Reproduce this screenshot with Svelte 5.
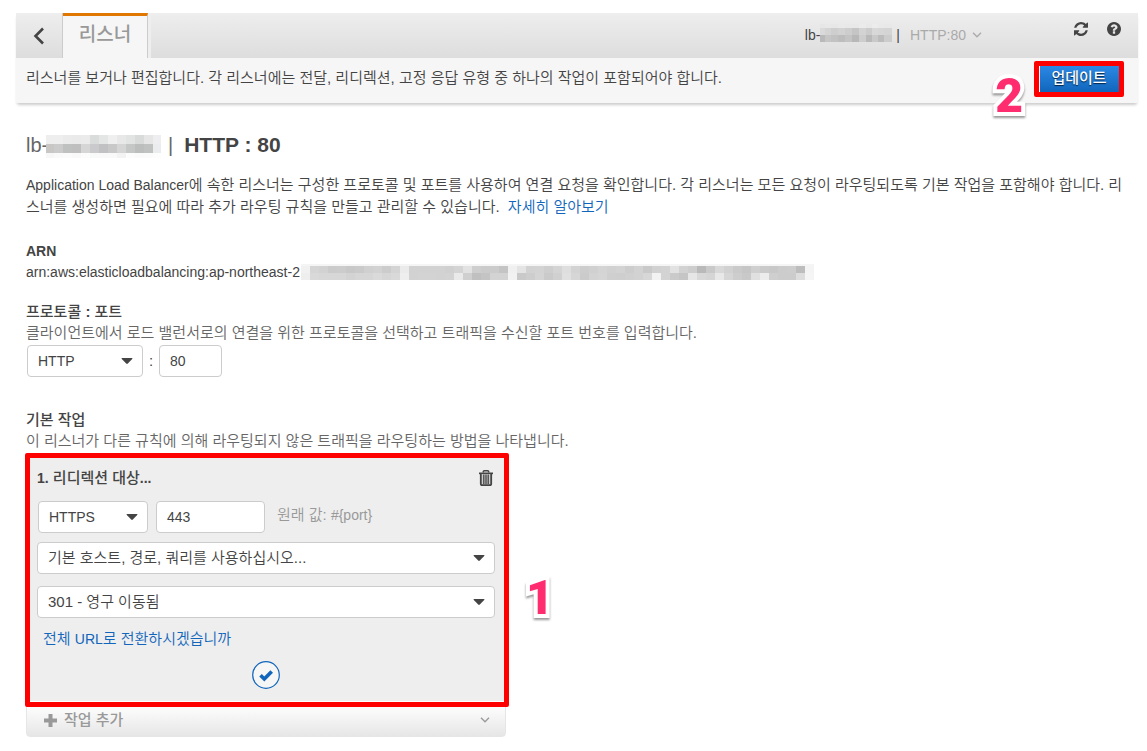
<script>
  let protocol = $state('HTTP');
  let port = $state('80');
  let redirectProtocol = $state('HTTPS');
  let redirectPort = $state('443');
  let target = $state('default');
  let status = $state('301');

  // Grey levels of the masked name cells, one string per row.
  const titleMask = {
    cols: [8, 9, 9, 9, 9, 9, 9, 9, 9, 9, 9, 9, 8],
    rows: [
      { h: 9, v: ['eee', 'eee', 'ebebeb', 'eaeaea', 'ebebeb', 'dadcdb', 'e4e5e5', 'efefef', 'e8e8e8', 'e2e3e3', 'd8dbda', 'e6e6e6', 'eeeef0'] },
      { h: 9, v: ['c9c6c6', 'cbcbcb', 'bfc0c0', 'c0bfbf', 'd6d6d6', 'cac9cc', 'c1c1c3', 'c8c8c8', 'd5d5d5', 'c5c6c6', 'bcbebe', 'c0c2c1', 'ebecee'] },
      { h: 5, v: ['f7f7f7', 'fafafa', 'fbfbfb', 'f9f9f9', 'fcfcfc', 'f8faf9', 'f9f9f9', 'f9f9f9', 'f3f3f3', 'fcfcfc', 'fafafa', 'fbfbfb', 'fdfdfd'] }
    ]
  };
  const crumbMask = {
    cols: [5, 6, 7, 7, 7, 7, 7, 6, 6, 6, 8],
    rows: [
      { h: 4, v: ['e6e6e6', 'e8e8e8', 'e7e7e7', 'e9e9e9', 'e8e8e8', 'e8e8e8', 'ebebeb', 'e8e8e8', 'ececec', 'e9e9e9', 'e8e8e8'] },
      { h: 7, v: ['dadada', 'd4d4d4', 'cecece', 'd2d2d2', 'cdcdcd', 'c5c5c5', 'd3d3d3', 'cbcbcb', 'd8d8d8', 'd6d6d6', 'd4d4d4'] },
      { h: 7, v: ['b9b9b9', 'c6c6c6', 'c2c2c2', 'bdbdbd', 'c4c4c4', 'b8b8b8', 'cdcdcd', 'b9b9b9', 'c9c9c9', 'bcbcbc', 'cccccc'] }
    ]
  };
  const arnTop = 'f1 d5 d2 cb cc c8 ca d0 d2 cc d4 eb d2 d2 d2 d2 d0 d4 e2 ce cb cb c4 f0 e4 d2 d3 ce d4 de d3 cd d0 d4 d1 d3 cd d2 c9 d1 d3 e2 d2 cd b9 c9 d8 d1 ca c6 cf ca c8 cc cd bd f4'.split(' ');
  const arnLow = 'ee d9 d7 d7 d7 d3 d6 d6 da d6 d9 ee d2 d3 d3 d2 d3 ea cf c0 c4 d3 d3 f2 c9 cd d4 ca d0 e0 d6 cb d3 d5 cf ce d0 d2 d7 f2 d3 ca c5 e6 d8 d5 e8 d6 cd c9 e0 ec cf cc cc dd f5'.split(' ');
  const grey = (a) => a.map((v) => v + v + v);
  const arnMask = {
    cols: arnTop.map(() => 9),
    rows: [
      { h: 2, v: arnTop.map(() => 'f5f5f5') },
      { h: 7, v: grey(arnTop) },
      { h: 7, v: grey(arnLow) }
    ]
  };
</script>

{#snippet mask(m)}
  {@const w = m.cols.reduce((a, b) => a + b, 0)}
  {@const h = m.rows.reduce((a, r) => a + r.h, 0)}
  <svg class="mask" width={w} height={h} viewBox="0 0 {w} {h}" shape-rendering="crispEdges" aria-hidden="true">
    {#each m.rows as row, r}
      {#each row.v as c, i}
        <rect
          x={m.cols.slice(0, i).reduce((a, b) => a + b, 0)}
          y={m.rows.slice(0, r).reduce((a, b) => a + b.h, 0)}
          width={m.cols[i]}
          height={row.h}
          fill="#{c}"
        />
      {/each}
    {/each}
  </svg>
{/snippet}

{#snippet caret()}
  <svg class="caret" width="12" height="6" viewBox="0 0 12 6" aria-hidden="true"><path d="M1.2 0h9.6q1.2 0 .4.9L6.8 5.6q-.8.7-1.6 0L.8.9Q0 0 1.2 0z" fill="#444" /></svg>
{/snippet}

{#snippet chevron()}
  <svg width="10" height="6" viewBox="0 0 10 6" aria-hidden="true"><path d="M1 .8l4 4 4-4" fill="none" stroke="currentColor" stroke-width="1.3" /></svg>
{/snippet}

<div class="page">
  <header>
    <div class="tabs">
      <button class="back" aria-label="Back">
        <svg width="12" height="18" viewBox="0 0 12 18"><path d="M10 1.5L2.5 9l7.500 7.500" fill="none" stroke="#444" stroke-width="2.600" /></svg>
      </button>
      <h1 class="tab">리스너</h1>
      <div class="crumbs">
        <span class="lb">lb-</span>{@render mask(crumbMask)}<span class="bar">|</span>
        <button class="crumb">HTTP:80 {@render chevron()}</button>
      </div>
      <div class="tools">
        <button aria-label="Refresh">
          <svg width="14" height="14" viewBox="0 0 1536 1536"><path fill="#444" d="M1511 928q0 5-1 7-64 268-268 434.500T764 1536q-146 0-282.500-55T238 1324l-129 129q-19 19-45 19t-45-19-19-45V960q0-26 19-45t45-19h448q26 0 45 19t19 45-19 45l-137 137q71 66 161 102t187 36q134 0 250-65t186-179q11-17 53-117 8-23 30-23h192q13 0 22.500 9.500t9.500 22.500zm25-800v448q0 26-19 45t-45 19h-448q-26 0-45-19t-19-45 19-45l138-138Q969 256 768 256q-134 0-250 65T332 500q-11 17-53 117-8 23-30 23H50q-13 0-22.500-9.500T18 608v-7q65-268 270-434.500T768 0q146 0 284 55.500T1297 212l130-129q19-19 45-19t45 19 19 45z" /></svg>
        </button>
        <button aria-label="Help">
          <svg width="14" height="14" viewBox="0 0 1536 1536"><path fill="#444" d="M896 1248v-192q0-14-9-23t-23-9H672q-14 0-23 9t-9 23v192q0 14 9 23t23 9h192q14 0 23-9t9-23zm256-672q0-88-55.500-163T958 297t-170-41q-243 0-371 213-15 24 8 42l132 100q7 6 19 6 16 0 25-12 53-68 86-92 34-24 86-24 48 0 85.500 26t37.500 59q0 38-20 61t-68 45q-63 28-115.500 86.500T640 892v36q0 14 9 23t23 9h192q14 0 23-9t9-23q0-19 21.500-49.500T972 829q32-18 49-28.500t46-35 44.500-48 28-60.500 12.500-81zm384 192q0 209-103 385.500T1153.500 1433 768 1536t-385.500-103T103 1153.500 0 768t103-385.500T382.500 103 768 0t385.500 103T1433 382.500 1536 768z" /></svg>
        </button>
      </div>
    </div>
    <div class="sub">
      <p>리스너를 보거나 편집합니다. 각 리스너에는 전달, 리디렉션, 고정 응답 유형 중 하나의 작업이 포함되어야 합니다.</p>
      <div class="action">
        <button class="update">업데이트</button>
        <div class="frame" aria-hidden="true"></div>
        <span class="mark two">2</span>
      </div>
    </div>
  </header>

  <main>
    <h2><span class="name">lb-</span>{@render mask(titleMask)}<span class="name sep">|</span>HTTP : 80</h2>
    <p class="intro"><span class="en">Application Load Balancer</span>에 속한 리스너는 구성한 프로토콜 및 포트를 사용하여 연결 요청을 확인합니다. 각 리스너는 모든 요청이 라우팅되도록 기본 작업을 포함해야 합니다. 리스너를 생성하면 필요에 따라 추가 라우팅 규칙을 만들고 관리할 수 있습니다. <a href="#more">자세히 알아보기</a></p>

    <section class="arn">
      <h3 class="en">ARN</h3>
      <p class="en">arn:aws:elasticloadbalancing:ap-northeast-2{@render mask(arnMask)}</p>
    </section>

    <section class="proto">
      <h3>프로토콜 <b>:</b> 포트</h3>
      <p class="hint">클라이언트에서 로드 밸런서로의 연결을 위한 프로토콜을 선택하고 트래픽을 수신할 포트 번호를 입력합니다.</p>
      <div class="fields">
        <div class="pick wide">
          <select aria-label="프로토콜" bind:value={protocol}><option>HTTP</option><option>HTTPS</option></select>
          {@render caret()}
        </div>
        <span class="colon">:</span>
        <input class="port" aria-label="포트" bind:value={port} />
      </div>
    </section>

    <section class="actions">
      <h3>기본 작업</h3>
      <p class="hint">이 리스너가 다른 규칙에 의해 라우팅되지 않은 트래픽을 라우팅하는 방법을 나타냅니다.</p>
      <div class="stack">
        <div class="card">
          <div class="cardhead">
            <h4><b class="en">1.</b> 리디렉션 대상<b class="en">...</b></h4>
            <button aria-label="Delete">
              <svg width="14" height="16" viewBox="0 0 14 16"><path d="M4.300 2.500V1.800Q4.300.8 5.300.8h3.400q1 0 1 1v.7" fill="none" stroke="#444" stroke-width="1.500" /><path d="M0 2.500h14v1.700H0z" fill="#444" /><path d="M1.800 4v10q0 1.200 1.200 1.200h8q1.200 0 1.200-1.200V4" fill="#ccc" stroke="#444" stroke-width="1.800" /><path d="M4.800 4.500v9.500M7 4.500v9.500M9.200 4.500v9.500" stroke="#444" stroke-width="1.300" /></svg>
            </button>
          </div>
          <div class="row">
            <div class="pick">
              <select aria-label="리디렉션 프로토콜" bind:value={redirectProtocol}><option>HTTPS</option><option>HTTP</option></select>
              {@render caret()}
            </div>
            <input class="rport" aria-label="리디렉션 포트" bind:value={redirectPort} />
            <span class="orig">원래 값: <span class="en">#{'{port}'}</span></span>
          </div>
          <div class="pick">
            <select class="ko" aria-label="대상" bind:value={target}><option value="default">기본 호스트, 경로, 쿼리를 사용하십시오...</option></select>
            {@render caret()}
          </div>
          <div class="pick">
            <select class="ko" aria-label="상태 코드" bind:value={status}><option value="301">301 - 영구 이동됨</option></select>
            {@render caret()}
          </div>
          <a class="switch" href="#url">전체 <span class="en">URL</span>로 전환하시겠습니까</a>
          <button class="ok" aria-label="OK">
            <svg width="28" height="28" viewBox="0 0 28 28"><circle cx="14" cy="14" r="13.300" fill="#f6f6f6" stroke="#1166bb" stroke-width="1.200" /><path d="M8.500 14.200l3.800 3.800 7.400-7.600" fill="none" stroke="#1166bb" stroke-width="3.600" /></svg>
          </button>
        </div>
        <button class="add">
          <svg width="13" height="13" viewBox="0 0 13 13" aria-hidden="true"><path d="M6.500 0v13M0 6.500h13" stroke="#999" stroke-width="4" /></svg>
          <span>작업 추가</span>
          {@render chevron()}
        </button>
        <div class="frame" aria-hidden="true"></div>
        <span class="mark one">1</span>
      </div>
    </section>
  </main>
</div>

<style>
  :global(body) {
    background: #fff;
  }
  .page {
    padding: 13px 9px 14px 16px;
    font-family: 'Liberation Sans', 'Noto Sans CJK KR', sans-serif;
    font-size: 15px;
    font-weight: 350;
    line-height: 22px;
    color: #444;
  }
  h1, h2, h3, h4, p {
    margin: 0;
  }
  button {
    padding: 0;
    border: 0;
    background: none;
    font: inherit;
    color: inherit;
    cursor: pointer;
  }
  svg {
    display: block;
    flex: none;
  }
  a {
    color: #1166bb;
    text-decoration: none;
  }
  .en {
    font-size: 14px;
  }
  header {
    box-shadow: 0 3px 3px -1px rgba(0, 0, 0, 0.2);
    border-radius: 0 0 3px 3px;
  }
  .tabs {
    display: flex;
    height: 45px;
    background: linear-gradient(#eee, #ddd);
  }
  .back {
    display: grid;
    place-items: center;
    width: 47px;
    border-right: 1px solid #ccc;
  }
  .tab {
    box-sizing: border-box;
    width: 85px;
    border-top: 3px solid #e07700;
    border-right: 1px solid #ccc;
    box-shadow: 3px 0 #eee;
    background: #f6f6f6;
    color: #999;
    font-size: 19px;
    font-weight: 500;
    line-height: 37px;
    text-align: center;
  }
  .crumbs {
    display: flex;
    align-items: center;
    height: 43px;
    margin-left: auto;
    font-size: 14px;
  }
  .crumbs .mask {
    margin-bottom: 4px;
  }
  .bar {
    margin: 0 10px 0 4px;
  }
  .crumb {
    display: flex;
    align-items: center;
    gap: 6px;
    color: #aaa;
  }
  .tools {
    display: flex;
    gap: 19px;
    height: 32px;
    margin: 0 17px 0 92px;
  }
  .sub {
    display: flex;
    justify-content: space-between;
    min-height: 45px;
    padding: 0 16px 0 10px;
    box-sizing: border-box;
    background: #f6f6f6;
    border-radius: 0 0 3px 3px;
  }
  .sub p {
    padding-top: 9px;
  }
  .action {
    position: relative;
    flex: none;
    align-self: flex-start;
    margin-top: 6px;
  }
  .update {
    display: block;
    width: 82px;
    height: 28px;
    padding-right: 4px;
    background: linear-gradient(#2d8be8, #1166bb);
    color: #fff;
    font-weight: 500;
    line-height: 26px;
    text-shadow: 0 1px 1px #024;
  }
  .frame {
    position: absolute;
    border: 5px solid #f00;
    border-radius: 2px;
    pointer-events: none;
  }
  .action .frame {
    inset: -3px -2px -5px -6px;
  }
  .mark {
    position: absolute;
    font: 900 48px/48px Roboto, 'Liberation Sans', sans-serif;
    color: #ff2d6f;
    -webkit-text-stroke: 8px #fff;
    paint-order: stroke fill;
    stroke-linejoin: round;
    filter: drop-shadow(0 2px 1px rgba(0, 0, 0, 0.4));
  }
  .two {
    right: 99px;
    top: 8px;
  }
  .one {
    left: 500px;
    top: 119px;
  }
  main {
    padding: 31px 9px 0 10px;
  }
  h2 {
    display: flex;
    align-items: center;
    height: 22px;
    font-size: 21px;
    line-height: 22px;
  }
  h2 .mask {
    margin-top: 3px;
  }
  .name {
    font-size: 20px;
    font-weight: normal;
    color: #666;
  }
  .name:first-child {
    width: 20px;
  }
  .sep {
    margin: 0 11px 0 7px;
  }
  .intro {
    margin-top: 18px;
    word-break: break-all;
  }
  .intro a {
    margin-left: 4px;
  }
  h3, h4 {
    font-weight: 500;
    line-height: 21px;
    font-size: 15px;
  }
  h3.en {
    font-size: 14px;
    font-weight: bold;
  }
  .arn {
    margin-top: 23px;
  }
  .arn p {
    display: flex;
    align-items: center;
    line-height: 21px;
  }
  .arn .mask {
    flex: 0 1 auto;
    min-width: 0;
    margin: 0 0 2px 1px;
  }
  .proto {
    margin-top: 18px;
  }
  .hint {
    color: #666;
    font-size: 15px;
    line-height: 22px;
  }
  .fields {
    display: flex;
    align-items: center;
    margin: 1px 0 0 1px;
  }
  .pick {
    display: grid;
    align-items: center;
  }
  .pick > :global(*) {
    grid-area: 1 / 1;
  }
  .caret {
    justify-self: end;
    margin-right: 10px;
    pointer-events: none;
  }
  select, input {
    box-sizing: border-box;
    width: 100%;
    height: 32px;
    padding: 0 10px;
    border: 1px solid #ccc;
    border-radius: 4px;
    background: #fff;
    appearance: none;
    color: #444;
    font: 350 14px/20px 'Liberation Sans', 'Noto Sans CJK KR', sans-serif;
  }
  select.ko {
    font-size: 15px;
  }
  .wide {
    width: 116px;
  }
  .colon {
    width: 16px;
    text-align: center;
  }
  .port {
    width: 63px;
  }
  .actions {
    margin-top: 32px;
  }
  .stack {
    position: relative;
    max-width: 480px;
    margin-top: 3px;
  }
  .card {
    display: grid;
    gap: 12px;
    padding: 12px 11px;
    background: #eee;
  }
  .cardhead {
    display: flex;
    align-items: center;
    justify-content: space-between;
    padding-right: 2px;
  }
  .row {
    display: grid;
    grid-template-columns: 110px 109px 1fr;
    gap: 8px;
    margin: 0 0 -3px 1px;
  }
  .orig {
    padding: 3px 0 0 4px;
    color: #999;
  }
  .switch {
    justify-self: start;
    margin: -1px 0 0 6px;
    line-height: 20px;
  }
  .ok {
    justify-self: center;
  }
  .add {
    display: flex;
    align-items: center;
    gap: 7px;
    width: 100%;
    height: 34px;
    margin-top: 2px;
    padding: 0 15px 0 17px;
    box-sizing: border-box;
    border: 1px solid #e6e6e6;
    border-radius: 0 0 4px 4px;
    background: linear-gradient(#fff, #e6e6e6);
    color: #999;
    font-weight: 500;
  }
  .add span {
    margin-right: auto;
  }
  .stack > .frame {
    inset: -2px -3px 30px -1px;
  }
</style>
